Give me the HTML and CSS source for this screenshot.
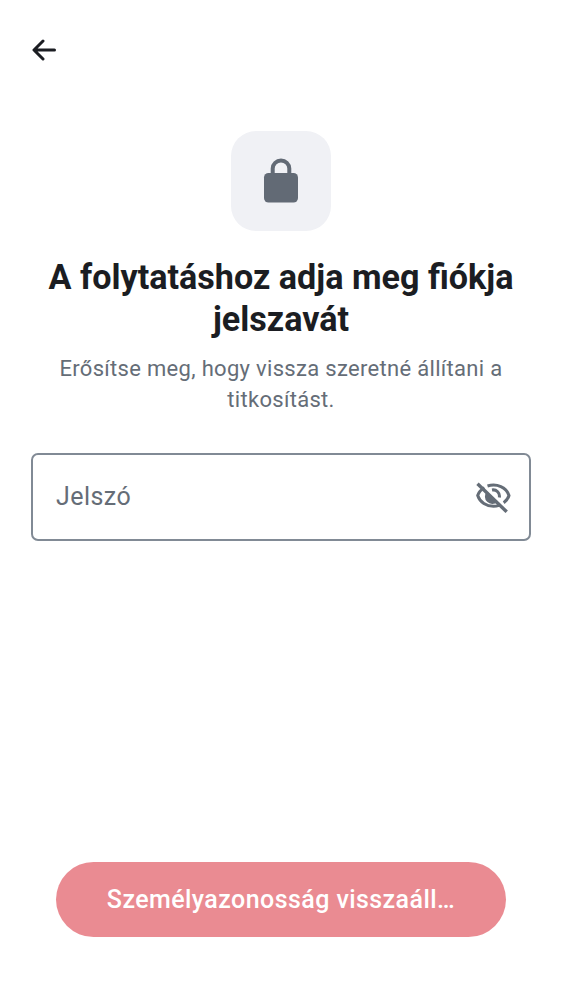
FILE: index.html
```html
<!DOCTYPE html>
<html lang="hu">
<head>
<meta charset="utf-8">
<title>Jelszó megadása</title>
<link rel="stylesheet" href="styles.css">
</head>
<body>
<main class="screen">
  <header class="topbar">
    <svg class="back" viewBox="0 0 24 24"><path d="M11 2 2 11 11 20M2.500 11H22.500"/></svg>
  </header>
  <div class="badge">
    <svg class="lock" viewBox="0 0 34 44"><rect y="15" width="34" height="29.500" rx="4.500"/><path d="M8.700 17V10.500a8.300 8 0 0 1 16.600 0V17"/></svg>
  </div>
  <h1 class="title">A folytatáshoz adja meg fiókja<br>jelszavát</h1>
  <p class="subtitle">Erősítse meg, hogy vissza szeretné állítani a<br>titkosítást.</p>
  <div class="field">
    <span class="placeholder">Jelszó</span>
    <svg class="eye" viewBox="0 0 36 32">
      <path class="pupil" d="M12 10.500A7.300 7.300 0 1 0 22.500 20.700Z"/>
      <path d="M9.500 6.800C6 8.500 3.600 11.200 2.700 14.500 5 21.500 11.500 25.300 18.500 25.300 20.500 25.300 22.200 25 24 24.300M12.500 5C22 2 31.500 6.500 34 14.500 33.200 17.500 31 20 28.700 21.700M17 9A6.300 6.300 0 0 1 24.300 16.500"/>
      <path class="slash" d="M2.500 2.800 31.700 30.800"/>
    </svg>
  </div>
  <button class="submit">Személyazonosság visszaáll…</button>
</main>
</body>
</html>
```
FILE: styles.css
```css
body { margin: 0; background: #fff; }
.screen {
  box-sizing: border-box;
  width: 562px;
  height: 1000px;
  padding: 39px 31px 63px;
  display: flex;
  flex-direction: column;
  align-items: center;
  font-family: Roboto, sans-serif;
}
.topbar { align-self: stretch; height: 92px; }
.back { display: block; width: 24px; height: 24px; margin-left: .5px; fill: none; stroke: #1b1d22; stroke-width: 3; stroke-linecap: round; stroke-linejoin: round; }
.badge {
  width: 100px;
  height: 100px;
  border-radius: 25px;
  background: #f0f1f5;
  display: flex;
  align-items: center;
  justify-content: center;
}
.lock { width: 34px; height: 44px; margin-bottom: 2px; fill: #626a75; overflow: visible; }
.lock path { fill: none; stroke: #626a75; stroke-width: 4; }
.title { margin: 25px 0 0; font-size: 34.15px; line-height: 42px; font-weight: 700; color: #1b1d22; text-align: center; white-space: nowrap; }
.subtitle { margin: 13px 0 0; font-size: 22px; line-height: 31px; letter-spacing: .31px; color: #656d77; text-align: center; white-space: nowrap; }
.field {
  box-sizing: border-box;
  width: 500px;
  height: 88px;
  margin-top: 38px;
  padding: 0 18px 0 23px;
  border: 2px solid #818a95;
  border-radius: 7px;
  display: flex;
  align-items: center;
  justify-content: space-between;
}
.placeholder { margin-bottom: 2px; font-size: 25px; letter-spacing: .45px; color: #656d77; }
.eye { width: 36px; height: 32px; fill: none; stroke: #656d77; stroke-width: 3; stroke-linecap: butt; }
.eye .pupil { fill: #656d77; stroke: none; }
.eye .slash { stroke-width: 3.4; }
.submit {
  width: 450px;
  height: 75px;
  margin: auto 0 0;
  padding: 0;
  border: 0;
  border-radius: 38px;
  background: #ea8b92;
  color: #fff;
  font: 500 25px/75px Roboto, sans-serif;
  letter-spacing: .43px;
}
```
